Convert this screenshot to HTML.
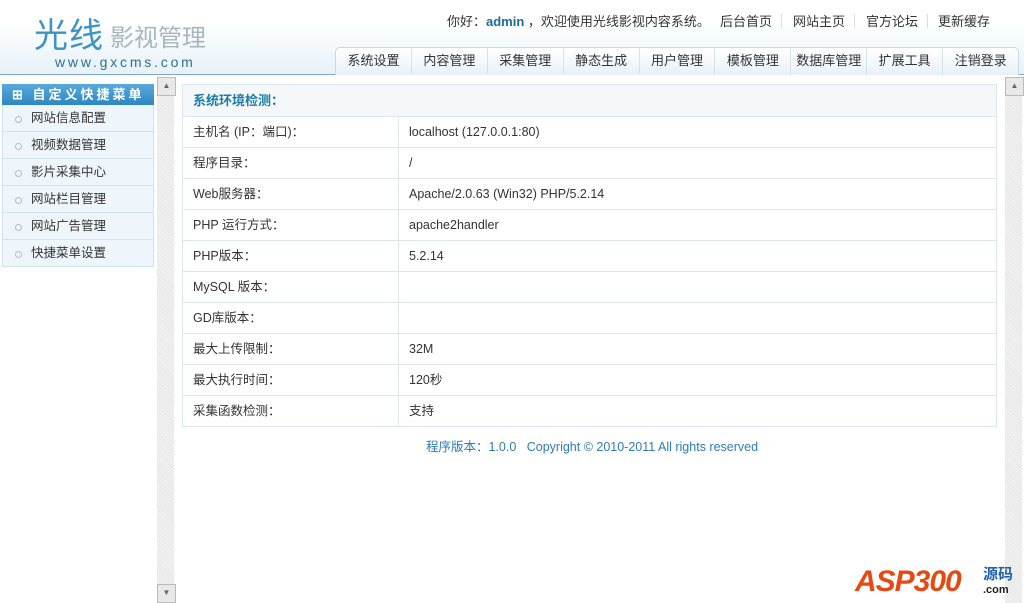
<!DOCTYPE html>
<html><head><meta charset="utf-8"><style>
*{margin:0;padding:0;box-sizing:border-box}
body{width:1024px;height:603px;overflow:hidden;background:#fff;font-family:"Liberation Sans","Noto Sans CJK SC",sans-serif;font-size:12px;color:#333;position:relative}
.hdr{position:absolute;left:0;top:0;width:1024px;height:75px;background:linear-gradient(#fff,#fff 30%,#e6f1f8);border-bottom:1px solid #7fa9c0}
.logo1{position:absolute;left:34px;top:8px;font-size:34px;color:#3b94c4;letter-spacing:1px}
.logo2{position:absolute;left:110px;top:18px;font-size:24px;color:#aab5bc}
.logo3{position:absolute;left:55px;top:54px;font-size:14px;color:#2f6f8f;letter-spacing:2.8px}
.top{position:absolute;left:447px;top:11px;font-size:13px;color:#333}
.top b{color:#1c6a94}
.tl{position:absolute;top:11px;font-size:13px;color:#333}
.sep{position:absolute;top:14px;width:1px;height:14px;background:#ddd}
.nav{position:absolute;left:335px;top:47px;width:684px;height:28px;border:1px solid #c6d9e6;border-bottom:none;border-radius:5px 5px 0 0;background:linear-gradient(#fff,#e9f1f6);display:flex}
.nav div{flex:1;text-align:center;line-height:26px;font-size:13px;color:#333;border-right:1px solid #d6e2ea}
.nav div:last-child{border:none}
.side{position:absolute;left:2px;top:84px;width:152px}
.sh{height:21px;background:linear-gradient(#59a9dc,#2d87c3);color:#fff;font-weight:bold;font-size:13px;line-height:21px;padding-left:10px;letter-spacing:3px}
.si{height:27px;background:#eef6fb;border:1px solid #d3e3ee;border-top:none;line-height:26px;padding-left:28px;font-size:12.5px;position:relative}
.si:before{content:"";position:absolute;left:12px;top:11px;width:5px;height:5px;border:1px solid #bbb;border-radius:50%}
.sb{position:absolute;top:77px;width:17px;height:526px;background:repeating-linear-gradient(45deg,#e4e4e4 0 1px,#f6f6f6 1px 2px)}
.sb:before{content:"▲";position:absolute;left:0;top:0;width:17px;height:17px;background:#e8e8e8;border:1px solid #bbb;font-size:8px;text-align:center;line-height:15px;color:#666}
.sb.b:after{content:"▼";position:absolute;left:0;bottom:0;width:17px;height:17px;background:#e8e8e8;border:1px solid #bbb;font-size:8px;text-align:center;line-height:15px;color:#666}
table{position:absolute;left:182px;top:84px;width:815px;border-collapse:collapse}
td{border:1px solid #dbe6ee;height:31px;padding:0 0 0 10px;font-size:12.5px;color:#333;line-height:16px;vertical-align:middle}
th{height:32px;text-align:left;padding-left:10px;background:#f4f8fb;border:1px solid #dbe6ee;color:#1c7ba6;font-size:13px;line-height:16px}
.c1{width:216px}
.foot{position:absolute;left:426px;top:436px;color:#2e7cb3;font-size:12.5px}
.asp{position:absolute;left:855px;top:565px;font:italic bold 30px "Liberation Sans",sans-serif;color:#e64a12;letter-spacing:-1px}
.asp2{position:absolute;left:983px;top:568px;color:#1d5fb0;font-size:15px;font-weight:bold;line-height:14px}
</style></head><body>
<div class="hdr">
<div class="logo1">光线</div><div class="logo2">影视管理</div>
<div class="logo3">www.gxcms.com</div>
<div class="top">你好：<b>admin</b> ，欢迎使用光线影视内容系统。</div>
<div class="tl" style="left:720px">后台首页</div><div class="sep" style="left:781px"></div>
<div class="tl" style="left:793px">网站主页</div><div class="sep" style="left:854px"></div>
<div class="tl" style="left:866px">官方论坛</div><div class="sep" style="left:927px"></div>
<div class="tl" style="left:938px">更新缓存</div>
<div class="nav"><div>系统设置</div><div>内容管理</div><div>采集管理</div><div>静态生成</div><div>用户管理</div><div>模板管理</div><div>数据库管理</div><div>扩展工具</div><div>注销登录</div></div>
</div>
<div class="side"><div class="sh">⊞ 自定义快捷菜单</div>
<div class="si">网站信息配置</div><div class="si">视频数据管理</div><div class="si">影片采集中心</div><div class="si">网站栏目管理</div><div class="si">网站广告管理</div><div class="si">快捷菜单设置</div></div>
<div class="sb b" style="left:157px"></div>
<div class="sb" style="left:1005px"></div>
<table>
<tr><th colspan="2">系统环境检测：</th></tr>
<tr><td class="c1">主机名 (IP：端口)：</td><td>localhost (127.0.0.1:80)</td></tr>
<tr><td>程序目录：</td><td>/</td></tr>
<tr><td>Web服务器：</td><td>Apache/2.0.63 (Win32) PHP/5.2.14</td></tr>
<tr><td>PHP 运行方式：</td><td>apache2handler</td></tr>
<tr><td>PHP版本：</td><td>5.2.14</td></tr>
<tr><td>MySQL 版本：</td><td></td></tr>
<tr><td>GD库版本：</td><td></td></tr>
<tr><td>最大上传限制：</td><td>32M</td></tr>
<tr><td>最大执行时间：</td><td>120秒</td></tr>
<tr><td>采集函数检测：</td><td>支持</td></tr>
</table>
<div class="foot">程序版本：1.0.0 &nbsp; Copyright © 2010-2011 All rights reserved</div>
<div class="asp">ASP300</div><div class="asp2">源码<br><span style="font-size:11px;color:#222">.com</span></div>
</body></html>
